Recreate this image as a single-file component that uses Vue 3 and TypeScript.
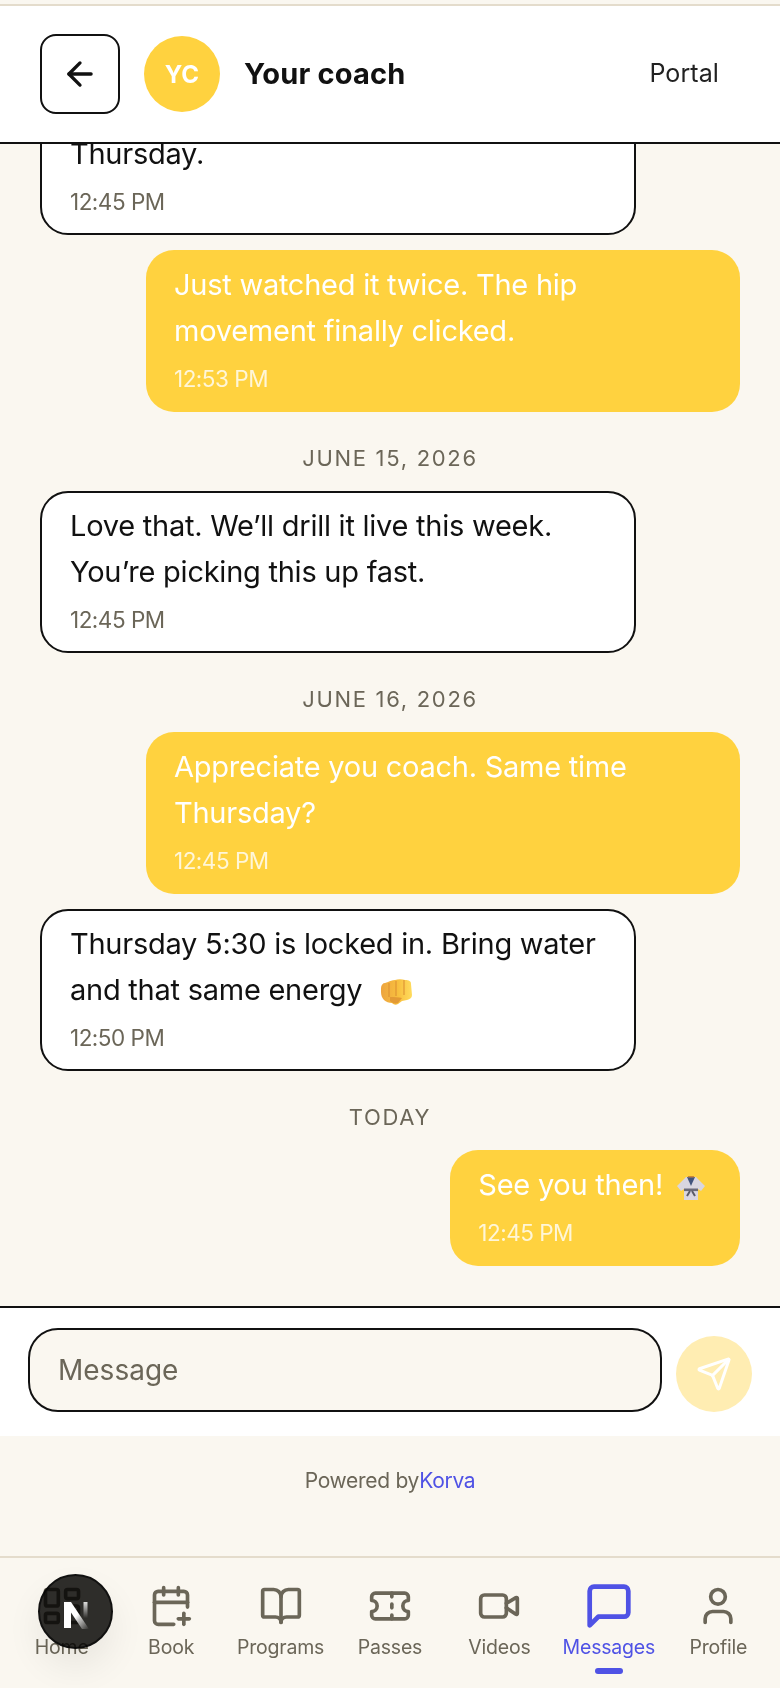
<script setup lang="ts">
type Msg = { kind: 'date'; text: string } | { kind: 'in' | 'out'; text: string; time: string; emoji?: 'fist' | 'gi'; clipped?: boolean }
type NavItem = { label: string; paths: string[]; active?: boolean }

const messages: Msg[] = [
  { kind: 'in', text: 'Thursday.', time: '12:45 PM', clipped: true },
  { kind: 'out', text: 'Just watched it twice. The hip movement finally clicked.', time: '12:53 PM' },
  { kind: 'date', text: 'June 15, 2026' },
  { kind: 'in', text: 'Love that. We’ll drill it live this week. You’re picking this up fast.', time: '12:45 PM' },
  { kind: 'date', text: 'June 16, 2026' },
  { kind: 'out', text: 'Appreciate you coach. Same time Thursday?', time: '12:45 PM' },
  { kind: 'in', text: 'Thursday 5:30 is locked in. Bring water and that same energy', time: '12:50 PM', emoji: 'fist' },
  { kind: 'date', text: 'Today' },
  { kind: 'out', text: 'See you then!', time: '12:45 PM', emoji: 'gi' },
]

const navItems: NavItem[] = [
  { label: 'Home', paths: ['M4 3h5a1 1 0 0 1 1 1v7a1 1 0 0 1-1 1H4a1 1 0 0 1-1-1V4a1 1 0 0 1 1-1z', 'M15 3h5a1 1 0 0 1 1 1v3a1 1 0 0 1-1 1h-5a1 1 0 0 1-1-1V4a1 1 0 0 1 1-1z', 'M15 12h5a1 1 0 0 1 1 1v7a1 1 0 0 1-1 1h-5a1 1 0 0 1-1-1v-7a1 1 0 0 1 1-1z', 'M4 16h5a1 1 0 0 1 1 1v3a1 1 0 0 1-1 1H4a1 1 0 0 1-1-1v-3a1 1 0 0 1 1-1z'] },
  { label: 'Book', paths: ['M16 19h6', 'M16 2v4', 'M19 16v6', 'M21 12.598V6a2 2 0 0 0-2-2H5a2 2 0 0 0-2 2v14a2 2 0 0 0 2 2h8.5', 'M3 10h18', 'M8 2v4'] },
  { label: 'Programs', paths: ['M12 7v14', 'M3 18a1 1 0 0 1-1-1V4a1 1 0 0 1 1-1h5a4 4 0 0 1 4 4 4 4 0 0 1 4-4h5a1 1 0 0 1 1 1v13a1 1 0 0 1-1 1h-6a3 3 0 0 0-3 3 3 3 0 0 0-3-3z'] },
  { label: 'Passes', paths: ['M2 9a3 3 0 0 1 0 6v2a2 2 0 0 0 2 2h16a2 2 0 0 0 2-2v-2a3 3 0 0 1 0-6V7a2 2 0 0 0-2-2H4a2 2 0 0 0-2 2Z', 'M13 5v2', 'M13 17v2', 'M13 11v2'] },
  { label: 'Videos', paths: ['m16 13 5.223 3.482a.5.5 0 0 0 .777-.416V7.87a.5.5 0 0 0-.752-.432L16 10.5', 'M4 6h10a2 2 0 0 1 2 2v8a2 2 0 0 1-2 2H4a2 2 0 0 1-2-2V8a2 2 0 0 1 2-2z'] },
  { label: 'Messages', paths: ['M21 15a2 2 0 0 1-2 2H7l-4 4V5a2 2 0 0 1 2-2h14a2 2 0 0 1 2 2z'], active: true },
  { label: 'Profile', paths: ['M12 3a4 4 0 1 0 0 8 4 4 0 0 0 0-8z', 'M19 21v-2a4 4 0 0 0-4-4H9a4 4 0 0 0-4 4v2'] },
]
</script>

<template>
  <div class="page">
    <header class="topbar">
      <button class="back" aria-label="Back">
        <svg width="38" height="38" viewBox="0 0 24 24" fill="none" stroke="currentColor" stroke-width="2.1" stroke-linecap="round" stroke-linejoin="round">
          <path d="m12 19-7-7 7-7" />
          <path d="M19 12H5" />
        </svg>
      </button>
      <div class="avatar">YC</div>
      <div class="title">Your coach</div>
      <a class="portal">Portal</a>
    </header>

    <main class="thread">
      <template v-for="(m, i) in messages" :key="i">
        <div v-if="m.kind === 'date'" class="date">{{ m.text }}</div>
        <div v-else class="bubble" :class="[m.kind, { clipped: m.clipped }]">
          <p class="text">
            {{ m.text }}
            <svg v-if="m.emoji === 'fist'" class="emoji fist" viewBox="0 0 32 26">
              <defs>
                <linearGradient id="fistfill" x1="0" y1="0" x2="1" y2="0">
                  <stop offset="0" stop-color="#eda43f" />
                  <stop offset="0.55" stop-color="#f8bf3e" />
                  <stop offset="1" stop-color="#ffdc5e" />
                </linearGradient>
              </defs>
              <path d="M1 9c0-3 2-5 4-5l3-1c2-1 4-2 7-2 3-1 7-1 10 0 4 0 6 1 6 4l1 11c0 3-2 4-5 5l-5 1-4 3c-2 1-4 1-6-1-3 0-6-1-8-3-2-2-3-5-3-8z" fill="url(#fistfill)" />
              <path d="M9 4v14M16 2v15M24 1v15" stroke="#dc8f31" stroke-width="1.4" fill="none" opacity="0.75" />
              <path d="M10 18c4 0 9 0 12 1l-4 5c-3 1-6 0-8-2z" fill="#e39a35" />
            </svg>
            <svg v-if="m.emoji === 'gi'" class="emoji gi" viewBox="0 0 30 24">
              <path d="M10 1h10l9 9-4 5-3-2v11H8V13l-3 2-4-5z" fill="#d9d6e0" />
              <path d="M11 1h8l-4 9z" fill="#42547c" />
              <path d="M12 0h6v1.5h-6z" fill="#c9853a" />
              <path d="M8 12.5h14v2.6H8z" fill="#6a6a7a" />
              <path d="M14 15l-3 5M16 15l3 5" stroke="#5b5b68" stroke-width="2" fill="none" />
            </svg>
          </p>
          <div class="time">{{ m.time }}</div>
        </div>
      </template>
    </main>

    <div class="composer">
      <div class="field">Message</div>
      <button class="send" aria-label="Send">
        <svg width="36" height="36" viewBox="0 0 24 24" fill="none" stroke="#fff" stroke-width="2" stroke-linecap="round" stroke-linejoin="round">
          <path d="M14.536 21.686a.5.5 0 0 0 .937-.024l6.5-19a.496.496 0 0 0-.635-.635l-19 6.5a.5.5 0 0 0-.024.937l7.93 3.18a2 2 0 0 1 1.112 1.11z" />
          <path d="m21.854 2.147-10.94 10.939" />
        </svg>
      </button>
    </div>

    <div class="powered">Powered by<span class="brand">Korva</span></div>

    <nav class="tabs">
      <div v-for="item in navItems" :key="item.label" class="tab" :class="{ active: item.active }">
        <svg class="tab-icon" viewBox="0 0 24 24" fill="none" stroke="currentColor" stroke-linecap="round" stroke-linejoin="round">
          <path v-for="d in item.paths" :key="d" :d="d" />
        </svg>
        <span class="tab-label">{{ item.label }}</span>
        <span v-if="item.active" class="tab-mark" />
      </div>
      <div class="dev-badge">
        <span class="dev-disc" />
        <svg class="dev-n" width="34" height="34" viewBox="0 0 34 34">
          <defs>
            <linearGradient id="nfade" x1="0" y1="0" x2="1" y2="1">
              <stop offset="0.5" stop-color="#fff" />
              <stop offset="1" stop-color="#fff" stop-opacity="0" />
            </linearGradient>
            <linearGradient id="nbar" x1="0" y1="0" x2="0" y2="1">
              <stop offset="0" stop-color="#fff" stop-opacity="0.85" />
              <stop offset="0.85" stop-color="#fff" stop-opacity="0" />
            </linearGradient>
          </defs>
          <rect x="5" y="7" width="7" height="26" fill="#fff" />
          <path d="M5 7h7l18 27h-7z" fill="url(#nfade)" />
          <rect x="24.5" y="7" width="4" height="19" fill="url(#nbar)" />
        </svg>
      </div>
    </nav>
  </div>
</template>

<style>
html,
body {
  margin: 0;
  background: #faf7f0;
}
</style>

<style scoped>
.page {
  height: 1688px;
  display: flex;
  flex-direction: column;
  overflow: hidden;
  background: #faf7f0;
  color: #111;
  font-family: Inter, 'Noto Sans', sans-serif;
}

.topbar {
  position: relative;
  z-index: 1;
  flex: none;
  height: 140px;
  margin-top: 4px;
  box-sizing: border-box;
  display: flex;
  align-items: center;
  gap: 24px;
  padding: 0 61px 0 40px;
  background: #fff;
  border-top: 2px solid #e4dccc;
  border-bottom: 2px solid #111;
}

.back {
  width: 80px;
  height: 80px;
  display: flex;
  align-items: center;
  justify-content: center;
  padding: 0;
  border: 2px solid #111;
  border-radius: 16px;
  background: #fff;
  color: #111;
}

.avatar {
  width: 76px;
  height: 76px;
  flex: none;
  display: flex;
  align-items: center;
  justify-content: center;
  border-radius: 50%;
  background: #ffd23f;
  color: #fff;
  font-size: 24px;
  font-weight: 700;
}

.title {
  flex: 1;
  margin-bottom: 2px;
  font-size: 29px;
  font-weight: 700;
  letter-spacing: 0.2px;
}

.portal {
  margin-bottom: 2px;
  font-size: 25px;
  letter-spacing: 0.1px;
  color: #222;
}

.thread {
  flex: 1;
  min-height: 0;
  overflow: hidden;
  display: flex;
  flex-direction: column;
  justify-content: flex-end;
  gap: 15px;
  padding: 0 40px 40px;
}

.bubble {
  flex: none;
  box-sizing: border-box;
  border-radius: 28px;
  padding: 12px 28px 17px;
}

.bubble.in {
  width: 596px;
  align-self: flex-start;
  padding: 10px 28px 15px;
  background: #fff;
  border: 2px solid #111;
}

.bubble.in.clipped {
  padding-top: 40px;
}

.bubble.out {
  width: 594px;
  align-self: flex-end;
  background: #ffd23f;
  color: #fff;
}

.bubble.out:last-child {
  width: auto;
  padding-right: 34px;
}

.text {
  margin: 0;
  font-size: 29px;
  line-height: 46px;
  letter-spacing: -0.25px;
}

.time {
  margin-top: 9px;
  font-size: 22.5px;
  line-height: 32px;
  letter-spacing: -0.5px;
  color: #6b6658;
}

.bubble.out .time {
  color: #fff6d8;
}

.emoji {
  display: inline-block;
  vertical-align: -5px;
}

.emoji.fist {
  width: 32px;
  height: 26px;
  margin-left: 10px;
}

.emoji.gi {
  width: 30px;
  height: 24px;
  margin-left: 5px;
}

.date {
  flex: none;
  margin: 16px 0 3px;
  text-align: center;
  font-size: 22px;
  line-height: 30px;
  letter-spacing: 1.7px;
  text-transform: uppercase;
  color: #6b6658;
}

.composer {
  flex: none;
  height: 130px;
  box-sizing: border-box;
  display: flex;
  align-items: flex-end;
  gap: 14px;
  padding: 20px 28px 24px;
  background: #fff;
  border-top: 2px solid #111;
}

.field {
  flex: 1;
  height: 84px;
  box-sizing: border-box;
  display: flex;
  align-items: center;
  padding-left: 28px;
  border: 2px solid #111;
  border-radius: 30px;
  background: #faf7f0;
  font-size: 28px;
  color: #6b6658;
}

.send {
  width: 76px;
  height: 76px;
  flex: none;
  display: flex;
  align-items: center;
  justify-content: center;
  padding: 0;
  border: 0;
  border-radius: 50%;
  background: #ffedb2;
}

.powered {
  flex: none;
  height: 120px;
  padding-top: 29px;
  box-sizing: border-box;
  text-align: center;
  font-size: 21px;
  line-height: 32px;
  letter-spacing: -0.3px;
  color: #6b6658;
}

.brand {
  color: #4f52e5;
}

.tabs {
  position: relative;
  flex: none;
  height: 132px;
  box-sizing: border-box;
  display: grid;
  grid-template-columns: repeat(7, 1fr);
  padding: 26px 7px 0;
  border-top: 2px solid #e4dccc;
}

.tab {
  position: relative;
  display: flex;
  flex-direction: column;
  align-items: center;
  color: #6b6658;
}

.tab.active {
  color: #4f52e5;
}

.tab-icon {
  width: 44px;
  height: 44px;
  stroke-width: 2;
}

.tab.active .tab-icon {
  stroke-width: 2.2;
  transform: scale(1.17);
}

.tab-label {
  margin-top: 6px;
  font-size: 19.5px;
  line-height: 26px;
  letter-spacing: -0.2px;
  white-space: nowrap;
}

.tab-mark {
  position: absolute;
  top: 84px;
  width: 28px;
  height: 6px;
  border-radius: 3px;
  background: #4f52e5;
}

.dev-badge {
  position: absolute;
  left: 38px;
  top: 16px;
  width: 75px;
  height: 75px;
  display: flex;
  align-items: center;
  justify-content: center;
}

.dev-disc {
  position: absolute;
  inset: 0;
  box-sizing: border-box;
  border-radius: 50%;
  border: 2px solid #111;
  background: #2f2e2c;
  box-shadow: 0 18px 36px rgba(0, 0, 0, 0.07);
  mix-blend-mode: multiply;
}

.dev-n {
  position: relative;
}
</style>
